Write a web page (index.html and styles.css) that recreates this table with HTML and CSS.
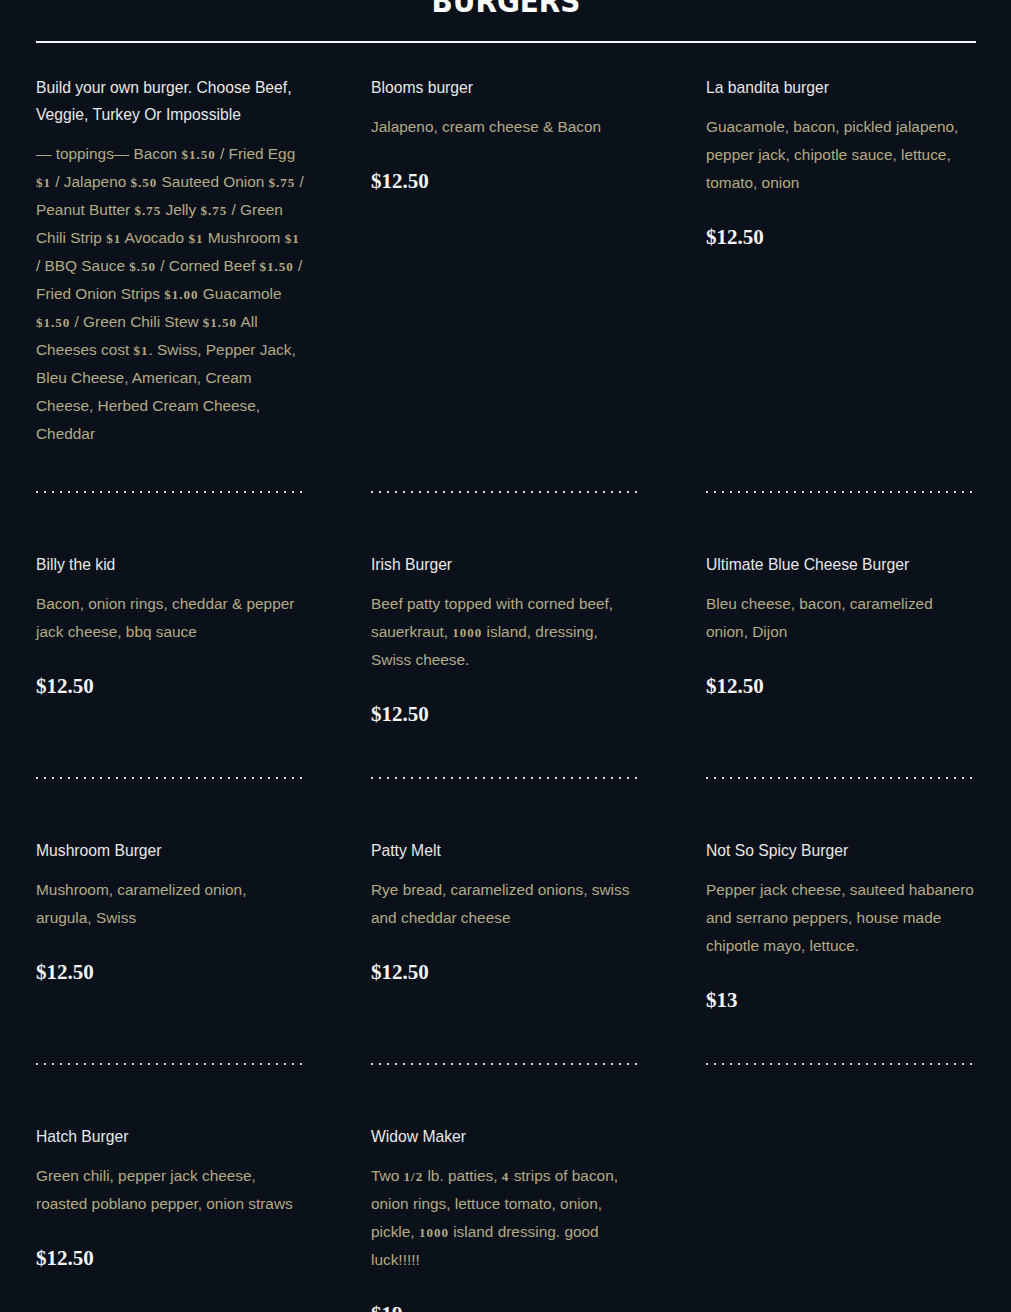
FILE: index.html
```html
<!DOCTYPE html>
<html lang="en">
<head>
<meta charset="utf-8">
<title>Burgers</title>
<link rel="stylesheet" href="styles.css">
</head>
<body>
<main class="menu">
  <h2 class="section-title">BURGERS</h2>
  <div class="rule"></div>
  <div class="grid">
    <div class="item">
      <div class="body">
        <h3 class="name">Build your own burger. Choose Beef, Veggie, Turkey Or Impossible</h3>
        <p class="desc">— toppings— Bacon <span class="num">$1.50</span> / Fried Egg <span class="num">$1</span> / Jalapeno <span class="num">$.50</span> Sauteed Onion <span class="num">$.75</span> / Peanut Butter <span class="num">$.75</span> Jelly <span class="num">$.75</span> / Green Chili Strip <span class="num">$1</span> Avocado <span class="num">$1</span> Mushroom <span class="num">$1</span> / BBQ Sauce <span class="num">$.50</span> / Corned Beef <span class="num">$1.50</span> / Fried Onion Strips <span class="num">$1.00</span> Guacamole <span class="num">$1.50</span> / Green Chili Stew <span class="num">$1.50</span> All Cheeses cost <span class="num">$1</span>. Swiss, Pepper Jack, Bleu Cheese, American, Cream Cheese, Herbed Cream Cheese, Cheddar</p>
      </div>
      <div class="dots"></div>
    </div>
    <div class="item">
      <div class="body">
        <h3 class="name">Blooms burger</h3>
        <p class="desc">Jalapeno, cream cheese &amp; Bacon</p>
        <div class="price">$12.50</div>
      </div>
      <div class="dots"></div>
    </div>
    <div class="item">
      <div class="body">
        <h3 class="name">La bandita burger</h3>
        <p class="desc">Guacamole, bacon, pickled jalapeno, pepper jack, chipotle sauce, lettuce, tomato, onion</p>
        <div class="price">$12.50</div>
      </div>
      <div class="dots"></div>
    </div>

    <div class="item">
      <div class="body">
        <h3 class="name">Billy the kid</h3>
        <p class="desc">Bacon, onion rings, cheddar &amp; pepper jack cheese, bbq sauce</p>
        <div class="price">$12.50</div>
      </div>
      <div class="dots"></div>
    </div>
    <div class="item">
      <div class="body">
        <h3 class="name">Irish Burger</h3>
        <p class="desc">Beef patty topped with corned beef, sauerkraut, <span class="num">1000</span> island, dressing, Swiss cheese.</p>
        <div class="price">$12.50</div>
      </div>
      <div class="dots"></div>
    </div>
    <div class="item">
      <div class="body">
        <h3 class="name">Ultimate Blue Cheese Burger</h3>
        <p class="desc">Bleu cheese, bacon, caramelized onion, Dijon</p>
        <div class="price">$12.50</div>
      </div>
      <div class="dots"></div>
    </div>

    <div class="item">
      <div class="body">
        <h3 class="name">Mushroom Burger</h3>
        <p class="desc">Mushroom, caramelized onion, arugula, Swiss</p>
        <div class="price">$12.50</div>
      </div>
      <div class="dots"></div>
    </div>
    <div class="item">
      <div class="body">
        <h3 class="name">Patty Melt</h3>
        <p class="desc">Rye bread, caramelized onions, swiss and cheddar cheese</p>
        <div class="price">$12.50</div>
      </div>
      <div class="dots"></div>
    </div>
    <div class="item">
      <div class="body">
        <h3 class="name">Not So Spicy Burger</h3>
        <p class="desc">Pepper jack cheese, sauteed habanero and serrano peppers, house made chipotle mayo, lettuce.</p>
        <div class="price">$13</div>
      </div>
      <div class="dots"></div>
    </div>

    <div class="item">
      <div class="body">
        <h3 class="name">Hatch Burger</h3>
        <p class="desc">Green chili, pepper jack cheese, roasted poblano pepper, onion straws</p>
        <div class="price">$12.50</div>
      </div>
      <div class="dots"></div>
    </div>
    <div class="item">
      <div class="body">
        <h3 class="name">Widow Maker</h3>
        <p class="desc">Two <span class="num">1/2</span> lb. patties, <span class="num">4</span> strips of bacon, onion rings, lettuce tomato, onion, pickle, <span class="num">1000</span> island dressing. good luck!!!!!</p>
        <div class="price">$19</div>
      </div>
      <div class="dots"></div>
    </div>
  </div>
</main>
</body>
</html>
```

FILE: styles.css
```css
html, body {
  margin: 0;
  padding: 0;
  background: #0a111b;
}

body {
  font-family: "Liberation Sans", Arial, sans-serif;
  color: #e6e6e6;
}

.menu {
  padding: 0 35px 0 36px;
}

.section-title {
  margin: -14px 0 0;
  text-align: center;
  font-family: "DejaVu Sans Condensed", "Liberation Sans Narrow", sans-serif;
  font-weight: 700;
  font-size: 31px;
  line-height: 30px;
  color: #ffffff;
}

.rule {
  height: 2px;
  background: #f2f2f2;
  margin-top: 25px;
}

.grid {
  display: grid;
  grid-template-columns: repeat(3, 270px);
  column-gap: 65px;
  row-gap: 57px;
  margin-top: 30px;
}

.item {
  display: flex;
  flex-direction: column;
}

.body {
  padding-bottom: 23px;
  display: flex;
  flex-direction: column;
}

.name {
  margin: 1px 0 12px;
  font-size: 15.7px;
  font-weight: 400;
  line-height: 27px;
  color: #e8e8e8;
}

.desc {
  margin: 0 0 20px;
  font-size: 15.4px;
  line-height: 28px;
  color: #b4aa84;
}

.num {
  font-family: "Liberation Serif", serif;
  font-size: 13px;
  font-weight: 700;
  letter-spacing: 1px;
  line-height: 1;
}

.price {
  margin: 6px 0 26px;
  font-family: "Liberation Serif", serif;
  font-weight: 700;
  font-size: 21px;
  line-height: 28px;
  color: #f4f4f4;
}

.dots {
  margin-top: auto;
  height: 2px;
  background: repeating-linear-gradient(to right, #d9d9d9 0 2px, transparent 2px 8px);
}
```
